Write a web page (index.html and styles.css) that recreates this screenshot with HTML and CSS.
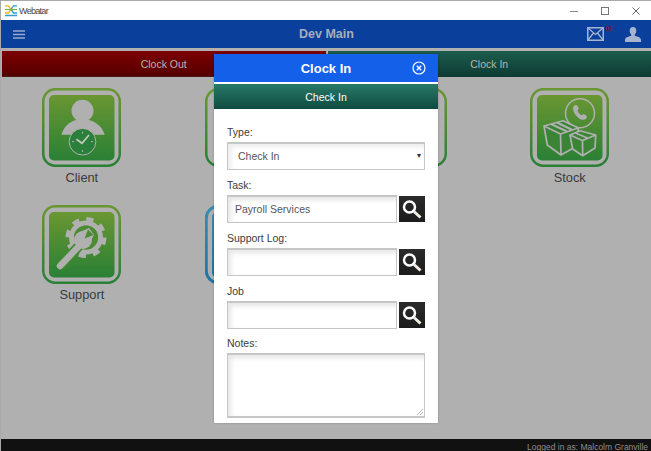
FILE: index.html
```html
<!DOCTYPE html>
<html lang="en">
<head>
<meta charset="utf-8">
<title>Webatar</title>
<link rel="stylesheet" href="styles.css">
</head>
<body>
<svg class="defs" width="0" height="0" aria-hidden="true">
  <defs>
    <linearGradient id="gGreen" x1="0" y1="0" x2="0" y2="1"><stop offset="0" stop-color="#6a9632"/><stop offset="1" stop-color="#2a8035"/></linearGradient>
    <linearGradient id="gBlue" x1="0" y1="0" x2="0" y2="1"><stop offset="0" stop-color="#3a8db0"/><stop offset="1" stop-color="#1a74a8"/></linearGradient>
  </defs>
</svg>
<div class="window">
  <header class="titlebar">
    <svg class="logo" viewBox="0 0 12 12"><path d="M0 .8h3.500L6 4.500 3.500 8H0" fill="none" stroke="#f2b01e" stroke-width="1.300"/><path d="M12 .8H8.500L6 4.500 8.500 8H12" fill="none" stroke="#2a9fd8" stroke-width="1.300"/><path d="M0 4.500h12" stroke="#7ab53a" stroke-width="1.200"/><path d="M0 10.500h12" stroke="#2a9fd8" stroke-width="1.500"/></svg>
    <span class="app-name">Webatar</span>
    <div class="winctl">
      <svg viewBox="0 0 8 8"><path d="M0 4.500h8" stroke="#888"/></svg>
      <svg viewBox="0 0 8 8"><rect x=".5" y=".5" width="7" height="7" fill="none" stroke="#777"/></svg>
      <svg viewBox="0 0 8 8"><path d="M.5.500l7 7M7.500.500l-7 7" stroke="#666"/></svg>
    </div>
  </header>
  <nav class="topbar">
    <svg class="burger" viewBox="0 0 12 9"><path d="M0 1h12M0 4.500h12M0 8h12" stroke="#9aa9c8" stroke-width="1.500"/></svg>
    <h1 class="page-title">Dev Main</h1>
    <div class="top-icons">
      <span class="mail">
        <svg viewBox="0 0 17 14"><rect x=".75" y=".75" width="15.500" height="12.500" fill="none" stroke="#a6b4cf" stroke-width="1.500"/><path d="M1 1l7.500 6.500L16 1M1 13l5.500-7M16 13l-5.500-7" fill="none" stroke="#a6b4cf" stroke-width="1.300"/></svg>
        <b class="badge">02</b>
      </span>
      <svg class="user" viewBox="0 0 16 15"><path d="M8 0c2.200 0 3.300 1.700 3.300 3.700 0 1.500-.7 3-1.500 3.800v1.300c2 .7 6.200 1.500 6.200 4.200v2H0v-2c0-2.700 4.200-3.500 6.200-4.200V7.500C5.400 6.700 4.700 5.200 4.700 3.700 4.700 1.700 5.800 0 8 0z" fill="#a6b4cf"/></svg>
    </div>
  </nav>
  <div class="clockbar">
    <div class="clockbtn out">Clock Out</div>
    <div class="clockbtn in">Clock In</div>
  </div>
  <main class="tiles">
    <div class="tile">
      <svg class="tile-icon" viewBox="0 0 79 79">
        <rect x="1.250" y="1.250" width="76.500" height="76.500" rx="12" fill="none" stroke="url(#gGreen)" stroke-width="2.500"/>
        <rect x="7" y="7" width="65.500" height="65.500" rx="5" fill="url(#gGreen)"/>
        <circle cx="40.500" cy="22.700" r="11" fill="#b0b0b0"/>
        <path d="M19.400 46.700C22 38 28 33.500 34 32h13c6 1.500 13 6 15.700 14.700z" fill="#b0b0b0"/>
        <circle cx="40.500" cy="53.700" r="13.300" fill="#2a7f3a" stroke="#b0b0b0"/>
        <path d="M34.400 51.300l5.600 4 7-8.300" fill="none" stroke="#c4c8bd" stroke-width="1.800"/>
        <path d="M40.500 43.500v2M40.500 62v2M30 53.700h2M49 53.700h2" stroke="#b0b0b0"/>
      </svg>
      <span class="tile-label">Client</span>
    </div>
    <div class="tile">
      <svg class="tile-icon" viewBox="0 0 79 79"><rect x="1.250" y="1.250" width="76.500" height="76.500" rx="12" fill="none" stroke="url(#gGreen)" stroke-width="2.500"/></svg>
    </div>
    <div class="tile">
      <svg class="tile-icon" viewBox="0 0 79 79"><rect x="1.250" y="1.250" width="76.500" height="76.500" rx="12" fill="none" stroke="url(#gGreen)" stroke-width="2.500"/></svg>
    </div>
    <div class="tile">
      <svg class="tile-icon" viewBox="0 0 79 79">
        <rect x="1.250" y="1.250" width="76.500" height="76.500" rx="12" fill="none" stroke="url(#gGreen)" stroke-width="2.500"/>
        <rect x="7" y="7" width="65.500" height="65.500" rx="5" fill="url(#gGreen)"/>
        <circle cx="50" cy="25.300" r="14.500" fill="none" stroke="#b0b0b0" stroke-width="1.500"/>
        <path d="M44 18c2-2 3.200-1 4.200 1.200.6 1.400.4 2.300-.8 3.300.8 2.200 2.200 3.800 4.400 4.800 1-1.100 1.900-1.300 3.200-.5 2.200 1.300 2.800 2.400.6 4.200-3 2.400-8-1-10-4-1.800-2.800-3.600-7-1.600-9z" fill="#b0b0b0"/>
        <g fill="#3a8535" stroke="#b0b0b0" stroke-width="1.700" stroke-linejoin="round">
          <path d="M14 38l19-5.300L48.300 40 47 58l-16 9-13.700-10z"/>
          <path d="M14 38l16.500 8L48.300 40M30.500 46l.5 21" fill="none"/>
          <path d="M21 36l16 7.500M27 34.500l15.500 7.500" fill="none" stroke-width="2"/>
          <path d="M40 47l10-4.300L65.700 47 65 60l-12.300 7.700-10-6.700z"/>
          <path d="M40 47l12.500 5.500L65.700 47M52.500 52.500l.2 15M45.500 45l13 5.500" fill="none"/>
        </g>
      </svg>
      <span class="tile-label">Stock</span>
    </div>
    <div class="tile">
      <svg class="tile-icon" viewBox="0 0 79 79">
        <rect x="1.250" y="1.250" width="76.500" height="76.500" rx="12" fill="none" stroke="url(#gGreen)" stroke-width="2.500"/>
        <rect x="7" y="7" width="65.500" height="65.500" rx="5" fill="url(#gGreen)"/>
        <circle cx="44" cy="32.500" r="18" fill="none" stroke="#b0b0b0" stroke-width="5" stroke-dasharray="7 7.100"/>
        <circle cx="44" cy="32.500" r="14.500" fill="none" stroke="#b0b0b0" stroke-width="5"/>
        <circle cx="44" cy="32.500" r="12" fill="#4c8b33"/>
        <path d="M18 61 38 40" stroke="#428932" stroke-width="10"/>
        <path d="M18 61 38 40" stroke="#b0b0b0" stroke-width="6.500" stroke-linecap="round"/>
        <circle cx="41" cy="35" r="9" fill="#b0b0b0"/>
        <path d="M36 28 47 23 52 30 46 41z" fill="#b0b0b0"/>
        <path d="M42.500 33.500 46 24.500 51.500 30z" fill="#4c8b33"/>
      </svg>
      <span class="tile-label">Support</span>
    </div>
    <div class="tile">
      <svg class="tile-icon" viewBox="0 0 79 79">
        <rect x="1.250" y="1.250" width="76.500" height="76.500" rx="12" fill="none" stroke="url(#gBlue)" stroke-width="3"/>
        <rect x="7" y="7" width="65.500" height="65.500" rx="5" fill="url(#gBlue)"/>
      </svg>
    </div>
  </main>
  <footer class="footer">Logged in as: Malcolm Granville</footer>

  <section class="modal">
    <div class="modal-head">
      <span>Clock In</span>
      <svg class="close" viewBox="0 0 14 14"><circle cx="7" cy="7" r="6" fill="none" stroke="#fff" stroke-width="1.200"/><path d="M4.800 4.800l4.400 4.400M9.200 4.800 4.800 9.200" stroke="#fff" stroke-width="1.300"/></svg>
    </div>
    <div class="modal-sub">Check In</div>
    <form class="modal-body">
      <div class="field">
        <label class="lbl">Type:</label>
        <div class="box select">Check In<span class="caret">▾</span></div>
      </div>
      <div class="field">
        <label class="lbl">Task:</label>
        <div class="row"><div class="box input">Payroll Services</div><span class="search"><svg viewBox="0 0 26 26"><circle cx="10.500" cy="11" r="5.500" fill="none" stroke="#fff" stroke-width="2.500"/><path d="M15 15.500l6.500 6" stroke="#f4efe2" stroke-width="3"/></svg></span></div>
      </div>
      <div class="field">
        <label class="lbl">Support Log:</label>
        <div class="row"><div class="box input"></div><span class="search"><svg viewBox="0 0 26 26"><circle cx="10.500" cy="11" r="5.500" fill="none" stroke="#fff" stroke-width="2.500"/><path d="M15 15.500l6.500 6" stroke="#f4efe2" stroke-width="3"/></svg></span></div>
      </div>
      <div class="field">
        <label class="lbl">Job</label>
        <div class="row"><div class="box input"></div><span class="search"><svg viewBox="0 0 26 26"><circle cx="10.500" cy="11" r="5.500" fill="none" stroke="#fff" stroke-width="2.500"/><path d="M15 15.500l6.500 6" stroke="#f4efe2" stroke-width="3"/></svg></span></div>
      </div>
      <div class="field field-notes">
        <label class="lbl">Notes:</label>
        <div class="box notes"><svg class="grip" viewBox="0 0 6 6"><path d="M0 6l6-6M3 6l3-3" stroke="#999" stroke-width=".7"/></svg></div>
      </div>
    </form>
  </section>
</div>
</body>
</html>
```
FILE: styles.css
```css
* { box-sizing: border-box; }
html, body { margin: 0; height: 100%; }
body { font-family: "Liberation Sans", Arial, sans-serif; overflow: hidden; }
.defs { position: absolute; }
.window {
  position: relative;
  width: 651px;
  height: 451px;
  display: flex;
  flex-direction: column;
  background: #b0b0b0;
  border-top: 1px solid #a9a9a9;
  border-left: 1px solid #a9a9a9;
  overflow: hidden;
}
.titlebar {
  height: 19px;
  flex: none;
  background: #fff;
  display: flex;
  align-items: center;
  padding-left: 4px;
  color: #444;
  font-size: 9px;
  letter-spacing: -.7px;
}
.logo { width: 12px; height: 12px; margin-right: 2px; }
.winctl { margin-left: auto; display: flex; gap: 23px; padding-right: 11px; }
.winctl svg { width: 8px; height: 8px; display: block; }
.topbar {
  height: 28px;
  flex: none;
  background: #0a3f9c;
  display: grid;
  grid-template-columns: 1fr auto 1fr;
  align-items: center;
  padding: 0 10px 0 12px;
}
.burger { width: 12px; height: 9px; }
.page-title {
  margin: 0 0 0 -1px;
  color: #a6aebd;
  font-size: 12.500px;
  font-weight: 700;
}
.top-icons { display: flex; align-items: center; justify-content: flex-end; gap: 21px; }
.mail { position: relative; display: block; width: 17px; height: 14px; }
.mail svg { width: 17px; height: 14px; display: block; }
.badge {
  position: absolute;
  left: 18px;
  top: -1px;
  font-size: 6.500px;
  line-height: 6px;
  color: #8a1020;
}
.user { width: 16px; height: 15px; display: block; }
.clockbar {
  flex: none;
  height: 26px;
  margin-top: 3px;
  padding-left: 1px;
  display: flex;
  gap: 2px;
}
.clockbtn {
  flex: 1;
  display: flex;
  align-items: center;
  justify-content: center;
  font-size: 10.500px;
  color: #b4b4b4;
}
.out { background: linear-gradient(#7c0000, #560000); border-bottom: 1px solid #4a1a1a; }
.in { background: linear-gradient(#1c5c4c, #0e3a33); }
.tiles {
  flex: 1;
  display: grid;
  grid-template-columns: repeat(4, 1fr);
  grid-auto-rows: 116.500px;
  padding-top: 11px;
  margin-left: -.5px;
  align-content: start;
}
.tile { display: flex; flex-direction: column; align-items: center; }
.tile-icon { width: 79px; height: 79px; display: block; flex: none; }
.tile-label { font-size: 12.800px; color: #3a3a3a; line-height: 15px; margin-top: 3px; }
.footer {
  flex: none;
  height: 12px;
  background: #111;
  color: #8f8f8f;
  font-size: 8.500px;
  line-height: 16px;
  text-align: right;
  padding-right: 3px;
  overflow: hidden;
}
.modal {
  position: absolute;
  left: 213px;
  top: 53px;
  width: 224px;
  height: 369px;
  background: #fff;
  box-shadow: 0 0 2px rgba(0,0,0,.25);
  display: flex;
  flex-direction: column;
}
.modal-head {
  height: 28px;
  flex: none;
  background: #1560e8;
  color: #fff;
  font-size: 13px;
  font-weight: 700;
  display: flex;
  align-items: center;
  justify-content: center;
  position: relative;
}
.close { position: absolute; right: 12px; top: 7px; width: 14px; height: 14px; }
.modal-sub {
  flex: none;
  height: 25px;
  margin-top: 2px;
  background: linear-gradient(#277a69, #0f4a40);
  color: #fff;
  font-size: 10.500px;
  display: flex;
  align-items: center;
  justify-content: center;
}
.modal-body { flex: 1; padding: 16px 13px 0; display: flex; flex-direction: column; }
.field { margin-bottom: 8px; }
.field-notes { margin-top: -1px; }
.lbl { display: block; font-size: 10.500px; line-height: 15px; padding-bottom: 2px; color: #3c3c3c; }
.box {
  border: 1px solid #c6c6c6;
  border-top-width: 2px;
  background: #fff;
  box-shadow: inset 3px 3px 5px rgba(0,0,0,.1);
  font-size: 10.500px;
  color: #555;
}
.select {
  height: 28px;
  display: flex;
  align-items: center;
  padding: 0 3px 2px 10px;
  justify-content: space-between;
  box-shadow: inset 3px 3px 5px rgba(0,0,0,.08);
}
.caret { font-size: 8px; color: #333; }
.row { display: flex; justify-content: space-between; align-items: center; }
.input { width: 170px; height: 28px; padding: 0 7px 2px; display: flex; align-items: center; }
.search { width: 26px; height: 26px; background: linear-gradient(#2b2b2b, #1c1c1c); display: block; }
.search svg { width: 26px; height: 26px; display: block; }
.notes { height: 65px; position: relative; border-width: 2px 1px 2px 1px; }
.grip { position: absolute; right: 1px; bottom: 1px; width: 6px; height: 6px; }
```
